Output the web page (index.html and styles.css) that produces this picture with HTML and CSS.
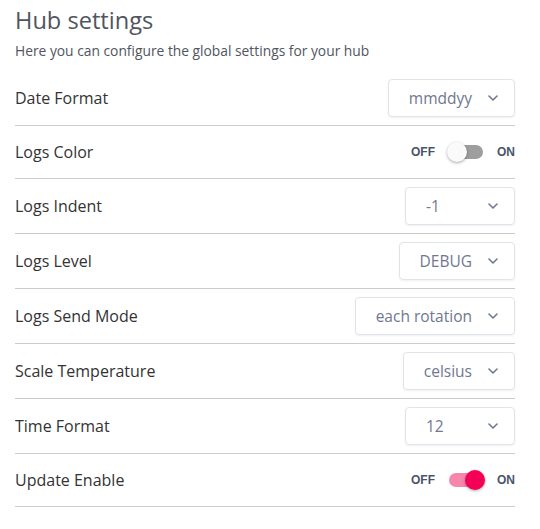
FILE: index.html
```html
<!DOCTYPE html>
<html>
<head>
<meta charset="utf-8">
<link rel="stylesheet" href="styles.css">
</head>
<body>
<div class="page">
  <h1 class="title">Hub settings</h1>
  <p class="subtitle">Here you can configure the global settings for your hub</p>
  <div class="list">
    <div class="row">
      <span class="label">Date Format</span>
      <div class="select"><span class="value">mmddyy</span><svg class="chev" viewBox="0 0 10 6"><path d="M1 1l4 4 4-4"/></svg></div>
    </div>
    <div class="row row-toggle">
      <span class="label">Logs Color</span>
      <div class="toggle"><span class="tlabel">OFF</span><span class="switch"><span class="track"></span><span class="knob"></span></span><span class="tlabel">ON</span></div>
    </div>
    <div class="row">
      <span class="label">Logs Indent</span>
      <div class="select"><span class="value">-1</span><svg class="chev" viewBox="0 0 10 6"><path d="M1 1l4 4 4-4"/></svg></div>
    </div>
    <div class="row">
      <span class="label">Logs Level</span>
      <div class="select"><span class="value">DEBUG</span><svg class="chev" viewBox="0 0 10 6"><path d="M1 1l4 4 4-4"/></svg></div>
    </div>
    <div class="row">
      <span class="label">Logs Send Mode</span>
      <div class="select"><span class="value">each rotation</span><svg class="chev" viewBox="0 0 10 6"><path d="M1 1l4 4 4-4"/></svg></div>
    </div>
    <div class="row">
      <span class="label">Scale Temperature</span>
      <div class="select"><span class="value">celsius</span><svg class="chev" viewBox="0 0 10 6"><path d="M1 1l4 4 4-4"/></svg></div>
    </div>
    <div class="row">
      <span class="label">Time Format</span>
      <div class="select"><span class="value">12</span><svg class="chev" viewBox="0 0 10 6"><path d="M1 1l4 4 4-4"/></svg></div>
    </div>
    <div class="row row-toggle">
      <span class="label">Update Enable</span>
      <div class="toggle"><span class="tlabel">OFF</span><span class="switch on"><span class="track"></span><span class="knob"></span></span><span class="tlabel">ON</span></div>
    </div>
  </div>
</div>
</body>
</html>
```

FILE: styles.css
```css
* { box-sizing: border-box; }
body {
  margin: 0;
  background: #fff;
  font-family: "Open Sans", "Noto Sans", sans-serif;
}
.page {
  width: 500px;
  margin-left: 15px;
}
.title {
  margin: 0;
  padding-top: 4px;
  font-size: 23.6px;
  line-height: 32px;
  font-weight: 400;
  color: #505560;
}
.subtitle {
  margin: 5px 0 0;
  font-size: 13.8px;
  line-height: 20px;
  color: #505560;
}
.list {
  margin-top: 10px;
}
.row {
  display: flex;
  align-items: center;
  justify-content: space-between;
  padding: 8px 0;
  border-bottom: 1px solid #cccccc;
}
.row-toggle {
  min-height: 53px;
}
.label {
  font-size: 16px;
  font-weight: 500;
  color: #333333;
}
.select {
  display: flex;
  align-items: center;
  height: 38px;
  min-width: 110px;
  padding: 0 16px 0 20px;
  border: 1px solid #dfe3ea;
  border-radius: 4px;
  box-shadow: 0 1px 2px rgba(60, 70, 90, 0.08);
}
.value {
  flex: 1;
  font-size: 15.5px;
  color: #6f7890;
  padding-right: 16px;
}
.chev {
  width: 10px;
  height: 6px;
  fill: none;
  stroke: #6f7890;
  stroke-width: 1.6;
  stroke-linecap: round;
  stroke-linejoin: round;
}
.toggle {
  display: flex;
  align-items: center;
  gap: 10px;
}
.tlabel {
  font-family: "Liberation Sans", Arial, sans-serif;
  font-size: 12px;
  font-weight: 700;
  color: #4a5468;
}
.switch {
  position: relative;
  display: block;
  width: 38px;
  height: 20px;
  margin: 0 2px;
}
.track {
  position: absolute;
  left: 2px;
  top: 3px;
  width: 34px;
  height: 14px;
  border-radius: 7px;
  background: #9e9e9e;
}
.knob {
  position: absolute;
  left: 0;
  top: 0;
  width: 20px;
  height: 20px;
  border-radius: 50%;
  background: #fafafa;
  box-shadow: 0 1px 3px rgba(0,0,0,0.35);
}
.switch.on .track {
  background: #f886ac;
}
.switch.on .knob {
  left: 18px;
  background: #f50057;
}
```
